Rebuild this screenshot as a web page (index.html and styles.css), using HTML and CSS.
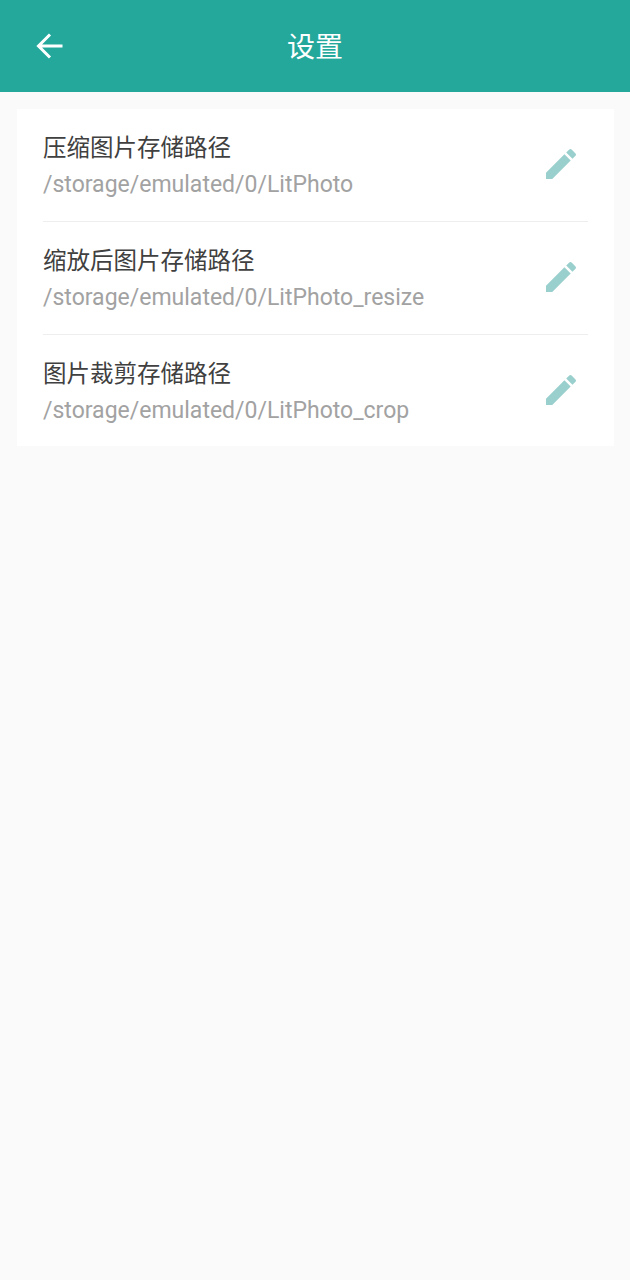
FILE: index.html
```html
<!DOCTYPE html>
<html lang="zh-CN">
<head>
    <meta charset="UTF-8">
    <title>设置</title>
    <link rel="stylesheet" href="styles.css">
</head>
<body>
    <header class="toolbar">
        <svg class="back-icon" viewBox="0 0 28 28" width="28" height="28">
            <path d="M26.5 14H3M14 2.5L2.5 14L14 25.5" fill="none" stroke="#fff" stroke-width="3"/>
        </svg>
        <h1 class="toolbar-title">设置</h1>
    </header>
    <main class="card">
        <div class="row">
            <div class="row-text">
                <div class="row-title">压缩图片存储路径</div>
                <div class="row-path">/storage/emulated/0/LitPhoto</div>
            </div>
            <svg class="edit-icon" viewBox="0 0 24 24" width="40" height="40">
                <path d="M3 17.25V21h3.75L17.81 9.94l-3.75-3.75L3 17.25zM20.71 7.04a1 1 0 0 0 0-1.41l-2.34-2.34a1 1 0 0 0-1.41 0l-1.83 1.83 3.75 3.75 1.83-1.83z"/>
            </svg>
        </div>
        <div class="row">
            <div class="row-text">
                <div class="row-title">缩放后图片存储路径</div>
                <div class="row-path">/storage/emulated/0/LitPhoto_resize</div>
            </div>
            <svg class="edit-icon" viewBox="0 0 24 24" width="40" height="40">
                <path d="M3 17.25V21h3.75L17.81 9.94l-3.75-3.75L3 17.25zM20.71 7.04a1 1 0 0 0 0-1.41l-2.34-2.34a1 1 0 0 0-1.41 0l-1.83 1.83 3.75 3.75 1.83-1.83z"/>
            </svg>
        </div>
        <div class="row">
            <div class="row-text">
                <div class="row-title">图片裁剪存储路径</div>
                <div class="row-path">/storage/emulated/0/LitPhoto_crop</div>
            </div>
            <svg class="edit-icon" viewBox="0 0 24 24" width="40" height="40">
                <path d="M3 17.25V21h3.75L17.81 9.94l-3.75-3.75L3 17.25zM20.71 7.04a1 1 0 0 0 0-1.41l-2.34-2.34a1 1 0 0 0-1.41 0l-1.83 1.83 3.75 3.75 1.83-1.83z"/>
            </svg>
        </div>
    </main>
</body>
</html>
```
FILE: styles.css
```css
html, body { margin: 0; padding: 0; }
body { width: 630px; height: 1280px; background-color: #fafafa; font-family: Roboto, "Noto Sans CJK SC", sans-serif; overflow: hidden; }

.toolbar { height: 92px; background-color: #24a89c; display: flex; align-items: center; justify-content: center; position: relative; }
.back-icon { position: absolute; left: 36px; top: 32px; }
.toolbar-title { margin: 0 0 3px; font-size: 28px; font-weight: 400; color: #fff; }

.card { margin: 17px 16px 0 17px; background-color: #fff; padding: 0 26px; }
.row { height: 112px; border-bottom: 1px solid #eeeeee; display: flex; align-items: center; justify-content: space-between; }
.row:last-child { height: 111px; border-bottom: none; }
.row-text { padding-top: 3px; }
.row-title { font-size: 23.5px; line-height: 36px; margin-bottom: 1px; color: #404040; }
.row-path { font-size: 23px; line-height: 36px; color: #a2a2a2; }
.edit-icon { fill: #99cfcc; margin: 0 7px 2px 0; }
```
